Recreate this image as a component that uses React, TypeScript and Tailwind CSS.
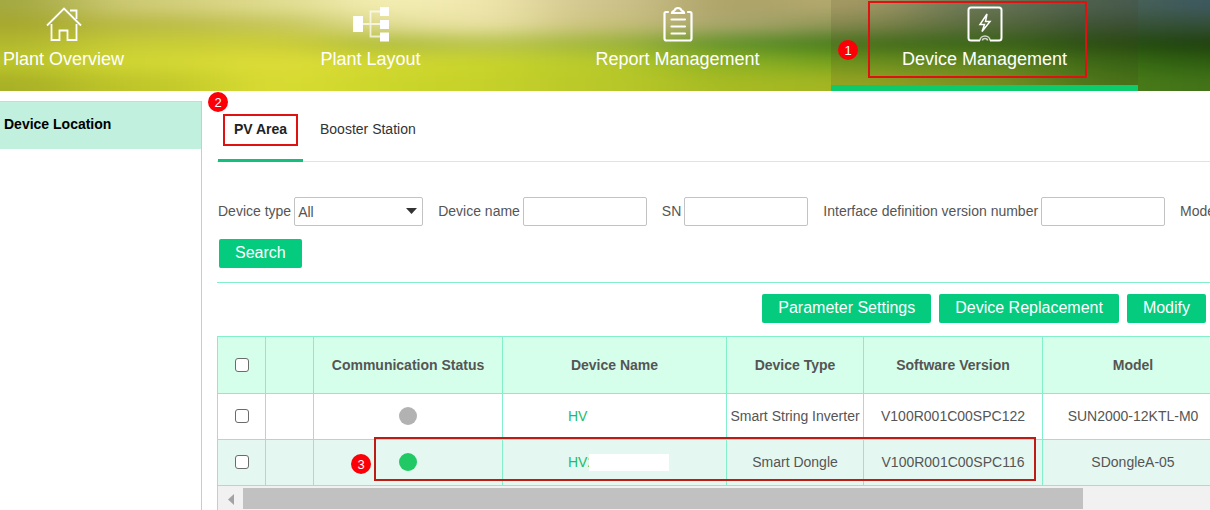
import type { ReactNode } from "react"

const navItems: { label: string; icon: ReactNode; active?: boolean }[] = [
  { label: "Plant Overview", icon: <HomeIcon /> },
  { label: "Plant Layout", icon: <LayoutIcon /> },
  { label: "Report Management", icon: <ReportIcon /> },
  { label: "Device Management", icon: <DeviceIcon />, active: true },
]

const devices = [
  { name: "HV", online: false, type: "Smart String Inverter", version: "V100R001C00SPC122", model: "SUN2000-12KTL-M0" },
  { name: "HV2", online: true, type: "Smart Dongle", version: "V100R001C00SPC116", model: "SDongleA-05" },
]

// Colour columns of the blurred field photo, top to bottom
const fieldColumns = [
  { x: 0, colors: ["#a3a840", "#a6a72c", "#b2b82e", "#bcc62b", "#a8b026"] },
  { x: 150, colors: ["#d0cc78", "#b9ba44", "#c8cd35", "#d3d834", "#c0c72a"] },
  { x: 280, colors: ["#e0dc90", "#c4c558", "#ccce36", "#dedd38", "#d9dc32"] },
  { x: 390, colors: ["#f5efb5", "#e2dd98", "#aebb3c", "#d2d831", "#cbd62b"] },
  { x: 480, colors: ["#efe6ac", "#ebe3a6", "#bcc650", "#c9d42a", "#c6d12a"] },
  { x: 600, colors: ["#cfc48c", "#c9c07c", "#9fb53a", "#b8ca2a", "#b9c829"] },
  { x: 740, colors: ["#aca268", "#a9a56c", "#5e9028", "#8bb024", "#a6ba22"] },
  { x: 850, colors: ["#b5aa70", "#8e9455", "#44781a", "#74a01c", "#a3b522"] },
  { x: 984, colors: ["#6e8060", "#5c7344", "#376c16", "#659420", "#86a024"] },
  { x: 1100, colors: ["#4c6452", "#3c5538", "#26500f", "#3c7014", "#4c7e18"] },
  { x: 1200, colors: ["#3d5860", "#334e38", "#1f400e", "#2e5e10", "#417218"] },
]

function FieldPhoto() {
  return (
    <svg className="absolute inset-0 h-full w-full" viewBox="0 0 1210 91" preserveAspectRatio="none" aria-hidden="true">
      <defs>
        <filter id="soften" x="-10%" y="-50%" width="120%" height="200%" colorInterpolationFilters="sRGB">
          <feGaussianBlur stdDeviation="42 8" />
        </filter>
      </defs>
      <g filter="url(#soften)">
        {fieldColumns.map((col, i) => {
          const prev = fieldColumns[i - 1]
          const next = fieldColumns[i + 1]
          const left = prev ? (prev.x + col.x) / 2 : -120
          const right = next ? (next.x + col.x) / 2 : 1330
          return col.colors.map((color, row) => (
            <rect
              key={`${col.x}-${row}`}
              x={left}
              y={row === 0 ? -40 : row * 19 - 4}
              width={right - left}
              height={row === 0 ? 55 : row === 4 ? 60 : 19}
              fill={color}
            />
          ))
        })}
      </g>
    </svg>
  )
}

function HomeIcon() {
  return (
    <svg width="36" height="36" viewBox="0 0 36 36" fill="none" stroke="white" strokeWidth="1.8">
      <path d="M1 19.500 18 2.500l17 17" />
      <path d="M5.500 18v16h8V24.500h8V34h9V18" />
      <path d="M24 4.500h6.500V13" />
    </svg>
  )
}

function LayoutIcon() {
  return (
    <svg width="36" height="36" viewBox="0 0 36 36" fill="none">
      <path d="M10 18h18M28 5.500H17.500v25H28" stroke="white" strokeOpacity="0.7" strokeWidth="1.800" />
      <path d="M0 10h10v16H0zM27 1h9v9h-9zM27 14h9v9h-9zM27 26.500h9v9h-9z" fill="white" />
    </svg>
  )
}

function ReportIcon() {
  return (
    <svg width="36" height="36" viewBox="0 0 36 36" fill="none" stroke="white" strokeWidth="2.2" strokeLinecap="round">
      <path d="M8 6H6q-1.500 0-1.500 1.500v25Q4.500 34.500 6.500 34.500h23q2 0 2-2v-25Q31.500 6 30 6h-2" />
      <path d="M12 7h12c0-1.500-1-2-2.500-2.500-.5-1.500-1.500-2.500-3.500-2.500s-3 1-3.500 2.500C13 5 12 5.500 12 7z" />
      <path d="M11.500 13.500h13.500M11.500 20.500h13.500M11.500 27.500h13.500" />
    </svg>
  )
}

function DeviceIcon() {
  return (
    <svg width="36" height="36" viewBox="0 0 36 36" fill="none" stroke="white" strokeWidth="2">
      <path d="M13 34.500H4q-2.500 0-2.500-2.500V4Q1.500 1.500 4 1.500h28q2.500 0 2.500 2.500v28q0 2.500-2.500 2.500h-9" />
      <path d="m20 8-7 10.500h4.500L15 25.500l8-10h-4.500z" strokeWidth="1.500" />
      <path d="M13 34.500a5 4.500 0 0 1 10 0M15.500 34.500a2.500 2 0 0 1 5 0" strokeWidth="1.600" strokeOpacity="0.75" />
    </svg>
  )
}

function Badge({ n, className }: { n: number; className: string }) {
  return (
    <span
      className={`absolute flex size-5 items-center justify-center rounded-full bg-[#fb0007] text-[13px] leading-none font-normal text-white ${className}`}
    >
      {n}
    </span>
  )
}

function Field({ id, label }: { id: string; label: string }) {
  return (
    <div className="flex shrink-0 items-center gap-[3px]">
      <label htmlFor={id} className="leading-5 pb-0.5">{label}</label>
      <input id={id} type="text" className="h-[29px] w-[124px] rounded-[2px] border border-[#c3c3c3] bg-white px-1" />
    </div>
  )
}

function ActionButton({ children }: { children: ReactNode }) {
  return (
    <button type="button" className="h-[29px] shrink-0 rounded-[2px] bg-[#05cb7f] px-4 pb-0.5 text-base leading-6 text-white">
      {children}
    </button>
  )
}

function RowCheckbox({ label }: { label: string }) {
  return (
    <input
      type="checkbox"
      aria-label={label}
      className="mx-auto block size-[14px] appearance-none rounded-[3px] border border-[#6b6b6b] bg-white checked:bg-[#05cb7f]"
    />
  )
}

export default function App() {
  return (
    <div className="flex h-screen flex-col overflow-hidden bg-white font-['Liberation_Sans',Arial,sans-serif] text-sm text-[#555]">
      <header className="relative shrink-0 overflow-hidden">
        <FieldPhoto />
        <nav className="relative -ml-[90px] flex">
          {navItems.map((item) => (
            <a
              key={item.label}
              href="#"
              className={`relative flex h-[91px] w-[307px] shrink-0 flex-col items-center border-b-[6px] pt-[6px] text-lg leading-[34px] text-white ${
                item.active ? "border-[#0ccb6c] bg-[#4a3a20]/15" : "border-transparent"
              }`}
            >
              {item.icon}
              {item.label}
              {item.active && (
                <>
                  <span className="absolute top-px left-[37px] h-[77px] w-[219px] border-2 border-[#df1111]" />
                  <Badge n={1} className="top-[40px] left-[7px]" />
                </>
              )}
            </a>
          ))}
        </nav>
      </header>

      <div className="flex min-h-0 flex-1">
        <aside className="mt-[10px] w-[202px] shrink-0 border-r border-[#84efcb]">
          <h2 className="border-t border-[#a5ecd3] bg-[#c1f0de] pb-[2px] pl-1 text-sm leading-[45px] font-bold text-black">
            Device Location
          </h2>
        </aside>

        <main className="min-w-0 flex-1 overflow-hidden pl-[15px]">
          {/* Area tabs */}
          <div className="flex h-[71px] border-b border-[#e2e2e2] pl-px">
            <a href="#" className="relative -mb-px w-[85px] border-b-[3px] border-[#12bf7c] pt-[28px] text-center leading-5 font-bold text-[#222]">
              PV Area
              <span className="absolute top-[23px] left-[5px] h-[32px] w-[75px] border-2 border-[#df1111]" />
              <Badge n={2} className="top-px -left-[10px]" />
            </a>
            <a href="#" className="px-[17px] pt-[28px] leading-5 text-[#333]">
              Booster Station
            </a>
          </div>

          {/* Filters */}
          <form className="border-b border-[#84efcb] pt-[35px] pb-[14px] pl-px">
            <div className="flex gap-[15px] whitespace-nowrap">
              <div className="flex shrink-0 items-center gap-[3px]">
                <label htmlFor="device-type" className="leading-5 pb-0.5">Device type</label>
                <div className="relative">
                  <select
                    id="device-type"
                    className="block h-[29px] w-[129px] appearance-none rounded-[2px] border border-[#c3c3c3] bg-white pl-[3px]"
                  >
                    <option>All</option>
                  </select>
                  <svg className="pointer-events-none absolute top-[11px] right-[6px]" width="11" height="6" viewBox="0 0 11 6">
                    <path d="M0 0h11L5.500 6z" fill="#333" />
                  </svg>
                </div>
              </div>
              <Field id="device-name" label="Device name" />
              <Field id="sn" label="SN" />
              <Field id="interface-version" label="Interface definition version number" />
              <Field id="model" label="Model" />
            </div>
            <div className="mt-[13px] pl-px">
              <ActionButton>Search</ActionButton>
            </div>
          </form>

          <div className="flex justify-end gap-2 pt-[11px] pr-1 pb-[13px]">
            <ActionButton>Parameter Settings</ActionButton>
            <ActionButton>Device Replacement</ActionButton>
            <ActionButton>Modify</ActionButton>
          </div>

          {/* Device list */}
          <div className="relative overflow-hidden">
            <table className="w-[1006px] table-fixed border-collapse text-center [&_td]:border [&_td]:border-[#84efcb] [&_td]:p-0 [&_td]:pb-0.5 [&_th]:border [&_th]:border-[#84efcb]">
              <colgroup>
                <col className="w-[48px]" />
                <col className="w-[48px]" />
                <col className="w-[189px]" />
                <col className="w-[224px]" />
                <col className="w-[137px]" />
                <col className="w-[179px]" />
                <col className="w-[181px]" />
              </colgroup>
              <thead>
                <tr className="h-[57px] bg-[#d5ffeb]">
                  <th><RowCheckbox label="Select all devices" /></th>
                  <th></th>
                  <th>Communication Status</th>
                  <th>Device Name</th>
                  <th>Device Type</th>
                  <th>Software Version</th>
                  <th>Model</th>
                </tr>
              </thead>
              <tbody>
                {devices.map((d) => (
                  <tr key={d.version} className="h-[46px] whitespace-nowrap even:bg-[#e4f8f1]">
                    <td><RowCheckbox label={`Select ${d.type}`} /></td>
                    <td></td>
                    <td>
                      <span className={`mx-auto block size-[18px] rounded-full ${d.online ? "bg-[#20c964]" : "bg-[#b2b2b2]"}`} />
                    </td>
                    <td className="text-left text-[#1bbd6d]">
                      <a href="#" className="relative ml-[65px]">
                        {d.name}
                        {d.online && <span className="absolute top-0 left-[21px] h-[17px] w-[80px] bg-white" />}
                      </a>
                    </td>
                    <td>{d.type}</td>
                    <td>{d.version}</td>
                    <td>{d.model}</td>
                  </tr>
                ))}
              </tbody>
            </table>
            <span className="absolute top-[101px] left-[157px] h-[44px] w-[662px] border-2 border-[#bd1c14]" />
            <Badge n={3} className="top-[118px] left-[134px]" />

            {/* Horizontal scroll track */}
            <div className="flex h-[24px] border-l border-[#84efcb] bg-[#f1f1f1] pt-[2px]">
              <div className="flex w-[25px] shrink-0 items-center justify-center">
                <svg width="6" height="11" viewBox="0 0 6 11">
                  <path d="M6 0v11L0 5.500z" fill="#a3a3a3" />
                </svg>
              </div>
              <div className="mr-[127px] h-[21px] flex-1 bg-[#c1c1c1]" />
            </div>
          </div>
        </main>
      </div>
    </div>
  )
}
